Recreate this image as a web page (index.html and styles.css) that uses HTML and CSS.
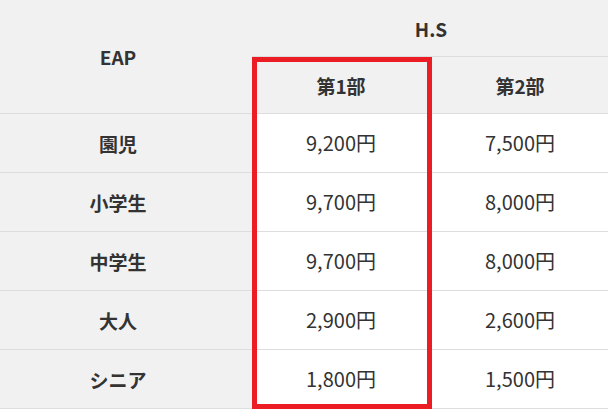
FILE: index.html
```html
<!DOCTYPE html>
<html lang="ja">
<head>
<meta charset="utf-8">
<title>料金表</title>
<link rel="stylesheet" href="styles.css">
</head>
<body>
<div class="wrap">
  <div class="price">
    <div class="cell head c1 span-r">EAP</div>
    <div class="cell head span-c">H.S</div>
    <div class="cell head">第1部</div>
    <div class="cell head">第2部</div>

    <div class="cell head c1">園児</div>
    <div class="cell val">9,200円</div>
    <div class="cell val">7,500円</div>

    <div class="cell head c1">小学生</div>
    <div class="cell val">9,700円</div>
    <div class="cell val">8,000円</div>

    <div class="cell head c1">中学生</div>
    <div class="cell val">9,700円</div>
    <div class="cell val">8,000円</div>

    <div class="cell head c1">大人</div>
    <div class="cell val">2,900円</div>
    <div class="cell val">2,600円</div>

    <div class="cell head c1">シニア</div>
    <div class="cell val">1,800円</div>
    <div class="cell val">1,500円</div>
  </div>
  <div class="highlight"></div>
</div>
</body>
</html>
```
FILE: styles.css
```css
html, body {
  margin: 0;
  padding: 0;
  background: #ffffff;
  overflow: hidden;
}
body {
  font-family: "Noto Sans CJK JP", "Noto Sans", sans-serif;
  color: #333333;
}
.wrap {
  position: relative;
  width: 610px;
}
.price {
  display: grid;
  grid-template-columns: 252px 178px 180px;
  grid-template-rows: 57px 57px 59px 59px 59px 59px 59px;
}
.cell {
  box-sizing: border-box;
  border-bottom: 1px solid #dddddd;
  display: flex;
  align-items: center;
  justify-content: center;
  font-size: 19px;
  line-height: 1;
}
.head {
  background: #f1f1f1;
  font-weight: 700;
}
.c1 {
  padding-right: 16px;
}
.span-r {
  grid-row: span 2;
}
.span-c {
  grid-column: span 2;
}
.val {
  background: #ffffff;
  font-weight: 400;
  font-size: 20px;
}
.highlight {
  position: absolute;
  left: 252px;
  top: 57px;
  width: 180px;
  height: 352px;
  box-sizing: border-box;
  border: 5px solid #ec1c24;
}
```
